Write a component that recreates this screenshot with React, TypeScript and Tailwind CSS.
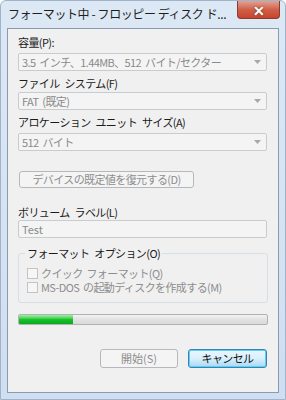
const font = { fontFamily: '"Noto Sans CJK JP", "Noto Sans", sans-serif' };

function Combo({ value }: { value: string }) {
  return (
    <div className="flex h-[18px] w-[249px] items-center justify-between rounded-[2px] border border-[#c9cccf] bg-[#f4f4f4] pl-[3px] pr-[5px]">
      <span className="text-[11px] leading-none tracking-[-0.6px] [word-spacing:2px] text-[#8a8a8a]">{value}</span>
      <svg width="7" height="4" viewBox="0 0 7 4">
        <path d="M0 0h7L3.5 4z" fill="#a8a8a8" />
      </svg>
    </div>
  );
}

function Label({ children, className = '' }: { children: React.ReactNode; className?: string }) {
  return (
    <div className={`text-[11px] leading-[14px] tracking-[-0.6px] [word-spacing:3px] text-[#1b1b1b] ${className}`}>
      {children}
    </div>
  );
}

function Check({ label }: { label: string }) {
  return (
    <div className="flex h-[14px] items-center gap-[3px]">
      <div className="h-[11px] w-[11px] border border-[#c4c4c4] bg-[#f6f6f6]" />
      <span className="text-[11px] leading-[12px] tracking-[-0.6px] [word-spacing:2px] text-[#8d8d8d]">{label}</span>
    </div>
  );
}

export default function App() {
  return (
    <div className="h-[400px] w-[286px] bg-white" style={font}>
      <div className="flex h-[400px] w-[286px] flex-col rounded-t-[6px] border border-[#9fb3cb] bg-gradient-to-b from-[#dde8f5] to-[#cfdef0] px-[6px] pb-[6px]">
        <div className="flex h-[27px] items-start justify-between">
          <span className="mt-[5px] pl-[1px] text-[12px] leading-[15px] tracking-[-0.4px] text-[#1e1e1e]">
            フォーマット中 - フロッピー ディスク ド...
          </span>
          <div className="mr-[-1px] flex h-[18px] w-[43px] items-center justify-center rounded-b-[4px] border border-t-0 border-[#8d3a2f] bg-gradient-to-b from-[#e2a294] via-[#cf6049] to-[#c7432c]">
            <span className="text-[14px] font-bold leading-none text-white [text-shadow:0_0_2px_#5a2a22]">✕</span>
          </div>
        </div>
        <div className="flex flex-1 flex-col border border-[#8a9bb0] bg-[#f0f0f0] pl-[10px] pt-[6px]">
          <Label>容量(P):</Label>
          <div className="mt-[4px]">
            <Combo value="3.5 インチ、1.44MB、512 バイト/セクター" />
          </div>
          <Label className="mt-[5px]">ファイル システム(F)</Label>
          <div className="mt-[2px]">
            <Combo value="FAT (既定)" />
          </div>
          <Label className="mt-[5px]">アロケーション ユニット サイズ(A)</Label>
          <div className="mt-[4px]">
            <Combo value="512 バイト" />
          </div>
          <div className="ml-[1px] mt-[20px] flex h-[17px] w-[175px] items-center justify-center rounded-[3px] border border-[#b5b9bd] bg-[#f4f4f4]">
            <span className="text-[11px] leading-none tracking-[-0.6px] text-[#8d8d8d]">デバイスの既定値を復元する(D)</span>
          </div>
          <Label className="mt-[17px]">ボリューム ラベル(L)</Label>
          <div className="mt-[1px] flex h-[18px] w-[249px] items-center rounded-[2px] border border-[#c9cccf] bg-[#f4f4f4] pl-[3px]">
            <span className="text-[11px] leading-none text-[#8a8a8a]">Test</span>
          </div>
          <div className="relative mt-[15px] h-[50px] w-[250px] rounded-[3px] border border-[#d5dfe5]">
            <span className="absolute left-[6px] top-[-8px] bg-[#f0f0f0] px-[2px] text-[11px] leading-[14px] tracking-[-0.6px] [word-spacing:3px] text-[#1b1b1b]">
              フォーマット オプション(O)
            </span>
            <div className="flex flex-col pl-[8px] pt-[12px]">
              <Check label="クイック フォーマット(Q)" />
              <Check label="MS-DOS の起動ディスクを作成する(M)" />
            </div>
          </div>
          <div className="mt-[11px] h-[11px] w-[250px] overflow-hidden rounded-[2px] border border-[#b2b2b2] bg-gradient-to-b from-[#f3f3f3] via-[#e2e2e2] to-[#d9d9d9]">
            <div className="h-full w-[54px] bg-gradient-to-b from-[#9ef0a6] via-[#15c52a] to-[#0aa820]" />
          </div>
          <div className="mt-[24px] flex gap-[10px] pl-[82px]">
            <div className="flex h-[19px] w-[78px] items-center justify-center rounded-[3px] border border-[#b5b9bd] bg-[#f4f4f4]">
              <span className="text-[11px] leading-none text-[#8d8d8d]">開始(S)</span>
            </div>
            <div className="flex h-[19px] w-[79px] items-center justify-center rounded-[3px] border border-[#3c7fb1] bg-gradient-to-b from-[#eaf6fd] via-[#d9f0fc] to-[#a7d9f5] shadow-[inset_0_0_0_1px_#5ad0f7]">
              <span className="text-[11px] leading-none tracking-[-0.6px] text-[#111]">キャンセル</span>
            </div>
          </div>
        </div>
      </div>
    </div>
  );
}
